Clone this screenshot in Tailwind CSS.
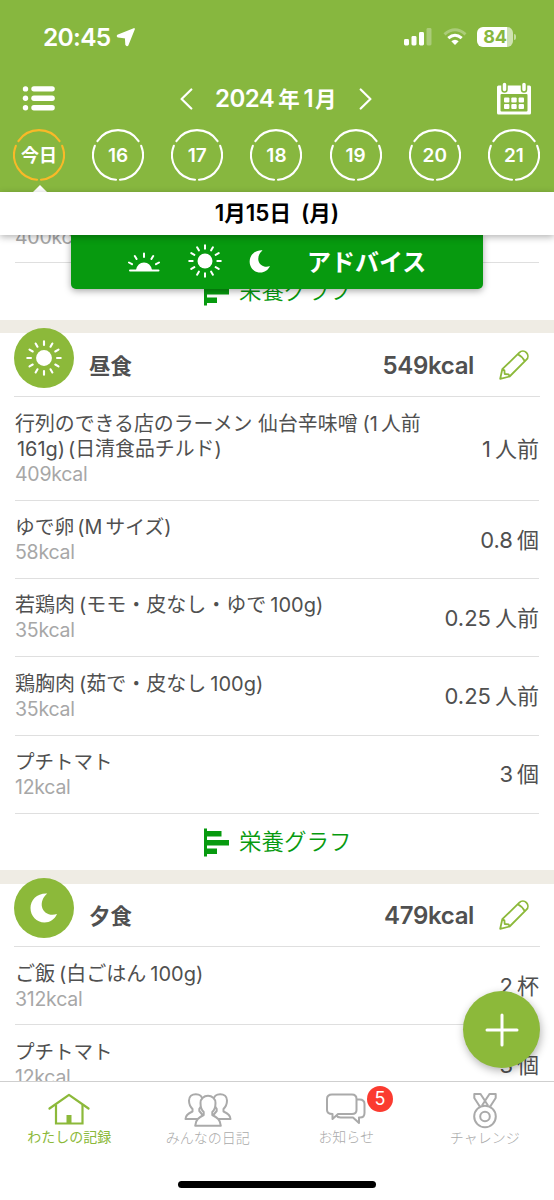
<!DOCTYPE html>
<html lang="ja">
<head>
<meta charset="utf-8">
<title>食事記録</title>
<script src="https://cdn.jsdelivr.net/npm/@tailwindcss/browser@4"></script>
</head>
<body class="bg-white">
<svg class="hidden">
  <defs>
    <symbol id="sun" viewBox="-17 -17 34 34">
      <circle r="7.5" fill="currentColor"/>
      <g stroke="currentColor" stroke-width="2" stroke-linecap="round">
        <path d="M0-12.3V-15.8M0 12.3V15.8M-12.3 0H-15.8M12.3 0H15.8"/>
        <path d="M0-12.3V-15.8M0 12.3V15.8M-12.3 0H-15.8M12.3 0H15.8" transform="rotate(30)"/>
        <path d="M0-12.3V-15.8M0 12.3V15.8M-12.3 0H-15.8M12.3 0H15.8" transform="rotate(60)"/>
      </g>
    </symbol>
    <symbol id="moon" viewBox="0 0 28 30"><path d="M17.200 0.500C13 4 11 9 12 14C13.500 20 20 23.500 27 21C24.500 26.500 20 29.500 14.500 29.500C6.500 29.500 0.500 23 0.500 15C0.500 7 7 0 17.200 0.500Z" fill="currentColor"/></symbol>
    <symbol id="ring" viewBox="0 0 52 52">
      <g fill="none" stroke="currentColor" stroke-width="2.100" stroke-linecap="round">
        <path d="M5.400 12.100A24.800 24.800 0 0 1 46.600 12.100"/>
        <path d="M49.200 16.800A24.800 24.800 0 0 1 28 50.700"/>
        <path d="M2.800 16.800A24.800 24.800 0 0 0 24 50.700"/>
      </g>
    </symbol>
    <symbol id="pencil" viewBox="0 0 30 30">
      <g fill="none" stroke="currentColor" stroke-width="1.800" stroke-linejoin="round" stroke-linecap="round">
        <path d="M1.200 28.800L3.300 19.200L20.300 2.600A4.900 4.900 0 0 1 27.400 9.700L10.600 26.500ZM3.300 19.200L5.400 20.300L5.700 24L9.600 24.300L10.600 26.500M18.700 4.200Q23.300 6.400 25.800 11.300"/>
      </g>
    </symbol>
    <symbol id="graph" viewBox="0 0 25 29"><path d="M0 0.500H3V3H17.500V8.500H3V12H25V17.500H3V20.500H13V26H3V28.500H0Z" fill="currentColor"/></symbol>
  </defs>
</svg>
<div class="relative flex h-[1200px] w-[554px] flex-col overflow-hidden bg-white font-['Inter','Noto_Sans_CJK_JP',sans-serif] text-[#505050]">

  <header class="relative z-20 h-[192px] shrink-0 bg-[#87b73f] text-white">
    <div class="flex h-[74px] items-center pl-[43px] pr-[38px]">
      <span class="text-[24.500px] font-semibold leading-none tracking-[-0.700px]">20:45</span>
      <svg class="ml-[6px] h-[20px] w-[20px]" viewBox="0 0 20 20"><path d="M18 2L11.700 17.700Q11 19 10.200 17.600L9.800 10.600L2.200 9.600Q1 9 2.300 8.400Z" fill="#fff" stroke="#fff" stroke-width="1.800" stroke-linejoin="round"/></svg>
      <svg class="ml-auto h-[20px] w-[28px]" viewBox="0 0 28 20"><g fill="#fff"><rect x="0" y="12" width="5" height="6.500" rx="1.400"/><rect x="7.500" y="9" width="5" height="9.500" rx="1.400"/><rect x="15" y="5" width="5" height="13.500" rx="1.400"/><rect x="22.500" y="1" width="5" height="17.500" rx="1.400" opacity=".3"/></g></svg>
      <svg class="ml-[11px] h-[18px] w-[24px]" viewBox="0 0 24 18"><g fill="none" stroke="#fff" stroke-width="3"><path d="M1.500 6.300Q12-2.800 22.500 6.300" opacity=".3"/><path d="M5.300 10.200Q12 4.300 18.700 10.200"/></g><path d="M8.300 13.200Q12 10.200 15.700 13.200L12 17Z" fill="#fff"/></svg>
      <div class="relative ml-[10px] flex h-[20px] w-[36px] items-center justify-center overflow-hidden rounded-[6px] bg-gradient-to-r from-white from-84% to-[#cfe2b2] to-84%">
        <span class="text-[18px] font-bold leading-none tracking-[-0.300px] text-[#87b73f]">84</span>
      </div>
      <span class="ml-px h-[6px] w-[2px] rounded-r-full bg-white/50"></span>
    </div>
    <div class="flex h-[49px] items-center pl-[22px] pr-[22px]">
      <svg class="h-[26px] w-[33px]" viewBox="0 0 33 26"><g fill="#fff"><circle cx="3.500" cy="2.900" r="2.700"/><circle cx="3.500" cy="12.300" r="2.700"/><circle cx="3.500" cy="21.800" r="2.700"/><rect x="9.300" y=".2" width="23.500" height="5.300" rx="2.650"/><rect x="9.300" y="9.600" width="23.500" height="5.300" rx="2.650"/><rect x="9.300" y="19.100" width="23.500" height="5.300" rx="2.650"/></g></svg>
      <svg class="ml-[124px] h-[22px] w-[14px]" viewBox="0 0 14 22"><path d="M12.300 1.500L2.600 11L12.300 20.500" fill="none" stroke="#fff" stroke-width="2.200" stroke-linecap="round" stroke-linejoin="round"/></svg>
      <div class="ml-[22px] flex w-[122px] items-baseline whitespace-nowrap text-[24px] font-semibold leading-none tracking-[-0.500px]"><span>2024</span><span class="ml-[4px] text-[21.500px] font-bold">年</span><span class="ml-[4px]">1</span><span class="ml-[2px] text-[21.500px] font-bold">月</span></div>
      <svg class="ml-[22px] h-[22px] w-[14px]" viewBox="0 0 14 22"><path d="M1.700 1.500L11.400 11L1.700 20.500" fill="none" stroke="#fff" stroke-width="2.200" stroke-linecap="round" stroke-linejoin="round"/></svg>
      <svg class="ml-auto h-[34px] w-[36px]" viewBox="0 0 36 34"><rect x="1" y="3.500" width="34" height="29" rx="1.500" fill="#fff"/><rect x="4.500" y="12" width="27" height="17.500" rx="1" fill="#87b73f"/><g fill="#fff" stroke="#87b73f" stroke-width="1.500"><rect x="6" y="0" width="5" height="10" rx="2.500"/><rect x="25.500" y="0" width="5" height="10" rx="2.500"/></g><g fill="#fff"><rect x="8" y="15.500" width="5.400" height="5" rx="1"/><rect x="15.300" y="15.500" width="5.400" height="5" rx="1"/><rect x="22.600" y="15.500" width="5.400" height="5" rx="1"/><rect x="8" y="22" width="5.400" height="5" rx="1"/><rect x="15.300" y="22" width="5.400" height="5" rx="1"/><rect x="22.600" y="22" width="5.400" height="5" rx="1"/></g></svg>
    </div>
    <div class="flex h-[64px] justify-between pl-[13px] pr-[14px] pt-[6px] text-[19px] font-semibold leading-none">
      <div class="grid size-[52px] place-items-center *:col-start-1 *:row-start-1"><svg class="size-[52px] text-[#f9b928]"><use href="#ring"/></svg><span class="mt-[2px] text-[18px] font-bold">今日</span></div>
      <div class="grid size-[52px] place-items-center *:col-start-1 *:row-start-1"><svg class="size-[52px]"><use href="#ring"/></svg><span>16</span></div>
      <div class="grid size-[52px] place-items-center *:col-start-1 *:row-start-1"><svg class="size-[52px]"><use href="#ring"/></svg><span>17</span></div>
      <div class="grid size-[52px] place-items-center *:col-start-1 *:row-start-1"><svg class="size-[52px]"><use href="#ring"/></svg><span>18</span></div>
      <div class="grid size-[52px] place-items-center *:col-start-1 *:row-start-1"><svg class="size-[52px]"><use href="#ring"/></svg><span>19</span></div>
      <div class="grid size-[52px] place-items-center *:col-start-1 *:row-start-1"><svg class="size-[52px]"><use href="#ring"/></svg><span>20</span></div>
      <div class="grid size-[52px] place-items-center *:col-start-1 *:row-start-1"><svg class="size-[52px]"><use href="#ring"/></svg><span>21</span></div>
    </div>
    <svg class="absolute bottom-0 left-[33px] h-[7px] w-[14px]" viewBox="0 0 14 7"><path d="M0 7L7 0L14 7Z" fill="#fff"/></svg>
  </header>

  <div class="relative z-20 flex h-[43px] shrink-0 items-center justify-center bg-white text-black shadow-[0_2px_7px_rgba(0,0,0,0.3)]">
    <div class="flex items-baseline whitespace-nowrap text-[22.500px] font-semibold leading-none"><span>1</span><span class="text-[21.500px] font-bold">月</span><span>15</span><span class="text-[21.500px] font-bold">日</span><span class="ml-[10px]">(</span><span class="text-[21.500px] font-bold">月</span><span>)</span></div>
  </div>

  <div class="absolute left-[71px] top-[235px] z-10 flex h-[54px] w-[412px] items-center rounded-b-[5px] bg-[#079a0f] pl-[56px] text-white shadow-[0_2px_7px_rgba(0,0,0,0.35)]">
    <svg class="h-[21px] w-[34px]" viewBox="0 0 34 21"><path d="M9 18Q10.500 10.500 17 10.500T25 18Z" fill="#fff"/><g stroke="#fff" stroke-width="2" stroke-linecap="round"><path d="M3 18.500H31.500M17 1.500V5M7.800 4L9.600 7M26.200 4L24.400 7M2 10.500L5 12.200M32 10.500L29 12.200"/></g></svg>
    <svg class="ml-[27px] mt-[-2px] size-[34px]"><use href="#sun"/></svg>
    <svg class="ml-[27px] mt-[-1px] h-[23px] w-[22px]"><use href="#moon"/></svg>
    <span class="ml-[36px] mt-[2px] whitespace-nowrap text-[24px] font-bold leading-none">アドバイス</span>
  </div>

  <main class="flex min-h-0 grow flex-col overflow-hidden">
    <div class="mx-[15px] h-[28px] shrink-0 border-b border-[#dfdfdf] text-[19.500px] leading-[5px] tracking-[-0.250px] text-[#a7a7a7]">400kcal</div>
    <div class="flex h-[57px] shrink-0 items-center pl-[204px] text-[#079a0f]"><svg class="h-[29px] w-[25px]"><use href="#graph"/></svg><span class="ml-[10px] text-[22.500px] font-[350] leading-none">栄養グラフ</span></div>
    <div class="h-[13px] shrink-0 bg-[#efece4]"></div>

    <section class="flex shrink-0 flex-col">
      <div class="mx-[14px] flex h-[64px] items-center border-b border-[#dfdfdf]">
        <div class="-mt-[13px] flex size-[60px] items-center justify-center rounded-full bg-[#8cb93a] text-white"><svg class="size-[36px]"><use href="#sun"/></svg></div>
        <span class="ml-[15px] mt-[4px] text-[21.500px] font-bold leading-none">昼食</span>
        <span class="ml-auto mt-[2px] text-[24px] font-semibold leading-none tracking-[-0.350px]">549kcal</span>
        <svg class="ml-[25px] mr-[11px] size-[30px] text-[#8cb93a]"><use href="#pencil"/></svg>
      </div>
      <div class="mx-[15px] flex h-[104px] items-center justify-between border-b border-[#dfdfdf]">
        <div class="whitespace-nowrap pt-[2px] text-[19.900px] leading-[25px]">
          <div>行列のできる店のラーメン 仙台辛味噌<span class="ml-[5px]">(1</span><span class="ml-[3px]">人前</span></div>
          <div><span class="ml-[2px]">161g)</span><span class="ml-[3px]">(日清食品チルド)</span></div>
          <div class="text-[19.500px] tracking-[-0.250px] text-[#a7a7a7]">409kcal</div>
        </div>
        <div class="pt-[1px] text-[22px]">1<span class="ml-[4px]">人前</span></div>
      </div>
      <div class="mx-[15px] flex h-[78px] items-center justify-between border-b border-[#dfdfdf]">
        <div class="whitespace-nowrap pt-[1px] text-[19.800px] leading-[25px]">
          <div>ゆで卵<span class="mx-[3px]">(M</span>サイズ)</div>
          <div class="text-[19.500px] tracking-[-0.250px] text-[#a7a7a7]">58kcal</div>
        </div>
        <div class="pt-[1px] text-[22px]">0.8<span class="ml-[4px]">個</span></div>
      </div>
      <div class="mx-[15px] flex h-[78px] items-center justify-between border-b border-[#dfdfdf]">
        <div class="whitespace-nowrap pt-[1px] text-[20px] leading-[25px]">
          <div>若鶏肉<span class="mx-[4px]">(モモ・皮なし・ゆで</span>100g)</div>
          <div class="text-[19.500px] tracking-[-0.250px] text-[#a7a7a7]">35kcal</div>
        </div>
        <div class="pt-[1px] text-[22px]">0.25<span class="ml-[4px]">人前</span></div>
      </div>
      <div class="mx-[15px] flex h-[79px] items-center justify-between border-b border-[#dfdfdf]">
        <div class="whitespace-nowrap pt-[1px] text-[20px] leading-[25px]">
          <div>鶏胸肉<span class="mx-[4px]">(茹で・皮なし</span>100g)</div>
          <div class="text-[19.500px] tracking-[-0.250px] text-[#a7a7a7]">35kcal</div>
        </div>
        <div class="pt-[1px] text-[22px]">0.25<span class="ml-[4px]">人前</span></div>
      </div>
      <div class="mx-[15px] flex h-[78px] items-center justify-between border-b border-[#dfdfdf]">
        <div class="whitespace-nowrap text-[19.500px] leading-[25px]">
          <div>プチトマト</div>
          <div class="text-[19.500px] tracking-[-0.250px] text-[#a7a7a7]">12kcal</div>
        </div>
        <div class="text-[22px]">3<span class="ml-[4px]">個</span></div>
      </div>
      <div class="flex h-[56px] items-center pl-[204px] text-[#079a0f]"><svg class="h-[29px] w-[25px]"><use href="#graph"/></svg><span class="ml-[10px] text-[22.500px] font-[350] leading-none">栄養グラフ</span></div>
    </section>
    <div class="h-[14px] shrink-0 bg-[#efece4]"></div>

    <section class="flex shrink-0 flex-col">
      <div class="mx-[14px] flex h-[63px] items-center border-b border-[#dfdfdf]">
        <div class="-mt-[14px] flex size-[60px] items-center justify-center rounded-full bg-[#8cb93a] text-white"><svg class="h-[30px] w-[28px]"><use href="#moon"/></svg></div>
        <span class="ml-[15px] mt-[4px] text-[21.500px] font-bold leading-none">夕食</span>
        <span class="ml-auto mt-[2px] text-[24px] font-semibold leading-none tracking-[-0.350px]">479kcal</span>
        <svg class="ml-[25px] mr-[11px] size-[30px] text-[#8cb93a]"><use href="#pencil"/></svg>
      </div>
      <div class="mx-[15px] flex h-[78px] items-center justify-between border-b border-[#dfdfdf]">
        <div class="whitespace-nowrap pt-[2px] text-[20px] leading-[25px]">
          <div>ご飯<span class="mx-[4px]">(白ごはん</span>100g)</div>
          <div class="text-[19.500px] tracking-[-0.250px] text-[#a7a7a7]">312kcal</div>
        </div>
        <div class="pt-[1px] text-[22px]">2<span class="ml-[4px]">杯</span></div>
      </div>
      <div class="mx-[15px] flex h-[78px] items-center justify-between">
        <div class="whitespace-nowrap pt-[2px] text-[19.500px] leading-[25px]">
          <div>プチトマト</div>
          <div class="text-[19.500px] tracking-[-0.250px] text-[#a7a7a7]">12kcal</div>
        </div>
        <div class="pt-[2px] text-[22px]">3<span class="ml-[4px]">個</span></div>
      </div>
    </section>
  </main>

  <button class="absolute left-[463px] top-[991px] z-10 flex size-[77px] items-center justify-center rounded-full bg-[#8cb93a] shadow-[1px_3px_8px_rgba(0,0,0,0.3)]" aria-label="追加">
    <svg class="size-[34px]" viewBox="0 0 34 34"><path d="M17 2V32M2 17H32" stroke="#fff" stroke-width="3" stroke-linecap="round"/></svg>
  </button>

  <nav class="relative z-20 flex h-[119px] shrink-0 flex-col items-center border-t border-[#cfcfcf] bg-white">
    <div class="grid w-full grid-cols-4 text-[14px] font-light leading-none text-[#aaaaaa]">
      <div class="flex flex-col items-center pt-[11px] text-[#8cb93a]">
        <svg class="h-[32px] w-[42px]" viewBox="0 0 42 32"><g fill="none" stroke="currentColor" stroke-width="2.200"><path d="M1.500 15.500L21 1.800L40.500 15.500" stroke-linecap="round" stroke-linejoin="round"/><path d="M8 12V30.500H34.500V12"/></g><rect x="18.500" y="22" width="5" height="8" fill="currentColor"/></svg>
        <span class="mt-[5px] font-normal">わたしの記録</span>
      </div>
      <div class="flex flex-col items-center pt-[11px]">
        <svg class="h-[34px] w-[48px]" viewBox="0 0 48 34"><g fill="#fff" stroke="currentColor" stroke-width="2" stroke-linejoin="round"><path d="M8.500 16C6 13.500 5 10 5 7.500C5 3.500 8 1.200 11.800 1.200S18.500 3.500 18.500 7.500C18.500 10.500 17.500 13.500 15.300 16V18L22 26H1.500C1.500 22 5 20 8.500 18.500Z"/><path d="M39.500 16C42 13.500 43 10 43 7.500C43 3.500 40 1.200 36.200 1.200S29.500 3.500 29.500 7.500C29.500 10.500 30.500 13.500 32.700 16V18L26 26H46.500C46.500 22 43 20 39.500 18.500Z"/><path d="M19.700 19C17.500 17 16.500 13 16.500 10C16.500 5.500 20 2.800 24 2.800S31.500 5.500 31.500 10C31.500 13 30.500 17 28.300 19V22C33 24.500 36.500 26.500 36.800 32.700H11.200C11.500 26.500 15 24.500 19.700 22Z"/></g></svg>
        <span class="mt-[4px]">みんなの日記</span>
      </div>
      <div class="relative flex flex-col items-center pt-[11px]">
        <svg class="h-[32px] w-[40px]" viewBox="0 0 40 32"><g fill="none" stroke="currentColor" stroke-width="2" stroke-linejoin="round"><path d="M6 1.500H26Q30.500 1.500 30.500 6V17Q30.500 21 26 21H12L6.500 26V21Q1 21 1 17V6Q1 1.500 6 1.500Z"/><path d="M30.500 6.500H33.500Q38.500 6.500 38.500 11V20Q38.500 24.500 34 24.500H33V30L27 24.500H14.500Q11.500 24.500 10.500 22.500"/></g></svg>
        <span class="mt-[5px]">お知らせ</span>
        <span class="absolute left-[90px] top-[4px] flex size-[26px] items-center justify-center rounded-full bg-[#fb3b30] text-[18px] font-normal text-white">5</span>
      </div>
      <div class="flex flex-col items-center pt-[11px]">
        <svg class="h-[36px] w-[24px]" viewBox="0 0 24 36"><g fill="none" stroke="currentColor" stroke-width="2" stroke-linejoin="round"><circle cx="12" cy="23.500" r="10.800"/><circle cx="12" cy="23.500" r="4.800"/><path d="M6.800 13.500L1.300 5V1H7.500L12 7.800L16.500 1H22.700V5L17.200 13.500M7.500 1L15 12.500M16.500 1L9 12.500"/></g></svg>
        <span class="mt-[2px]">チャレンジ</span>
      </div>
    </div>
    <div class="mt-auto mb-[12px] h-[7px] w-[198px] rounded-full bg-black"></div>
  </nav>
</div>
</body>
</html>
